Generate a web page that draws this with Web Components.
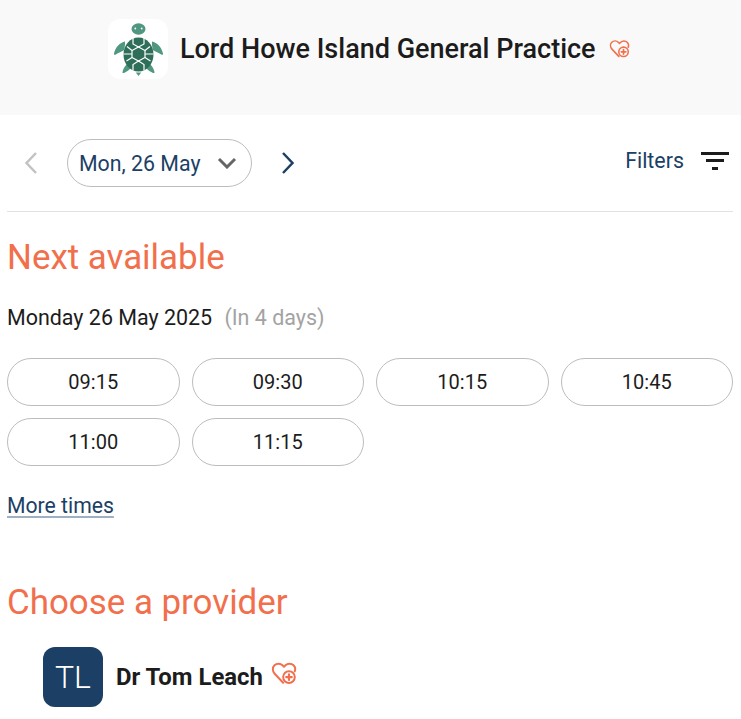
<!DOCTYPE html>
<html lang="en"><head><meta charset="utf-8"><title>Lord Howe Island General Practice</title>
<style>
html,body{margin:0;padding:0;background:#fff;font-family:Roboto,"Liberation Sans",sans-serif;color:#1c1c1c}
html{overflow:hidden}
</style></head><body>
<booking-page></booking-page>
<template id="heart"><svg viewBox="0 0 24 24" width="100%" height="100%" fill="none" stroke="#f26f4c" stroke-width="1.8" stroke-linecap="round" stroke-linejoin="round" style="display:block"><path d="M11.2 21 3.400 12.700C1.200 10.300 1.200 6.900 3.200 4.900 5.300 2.900 8.600 2.900 10.600 4.900L12 6.300l1.400-1.400c2-2 5.400-2 7.400 0 1.500 1.500 1.900 3.700 1.100 5.600"/><circle cx="16.600" cy="15.800" r="5.400" fill="#fff"/><path d="M16.600 13.200v5.200M14 15.800h5.200" stroke-width="2"/></svg></template>
<script>
const heartMarkup=document.getElementById('heart').innerHTML;
class HeartIcon extends HTMLElement{constructor(){super();this.attachShadow({mode:'open'}).innerHTML=`<style>:host{display:block;width:var(--s,24px);height:var(--s,24px);flex:none}</style>${heartMarkup}`}}
customElements.define('heart-icon',HeartIcon);

class TurtleLogo extends HTMLElement{constructor(){super();this.attachShadow({mode:'open'}).innerHTML=`<style>:host{display:block;width:60px;height:60px;border-radius:12px;background:#fff;flex:none}svg{display:block}</style>
<svg viewBox="0 0 60 60" width="60" height="60">
<ellipse cx="30.500" cy="10" rx="7" ry="5.800" fill="#4f9780"/>
<circle cx="27.300" cy="9.500" r="0.900" fill="#fff"/><circle cx="33.700" cy="9.500" r="0.900" fill="#fff"/>
<path d="M17 22.500C12 23.500 7.500 28 6 34.500c-.2 1.200.8 1.700 1.800 1 2.500-1.800 6-2.500 8-4.200 1-2.800 1.500-5.800 1.200-8.800zM44 22.500c5 1 9.500 5.500 11 12 .2 1.200-.8 1.700-1.800 1-2.500-1.800-6-2.500-8-4.200-1-2.800-1.500-5.800-1.200-8.800z" fill="#4f9780"/>
<path d="M19.500 44.500c-2.300 2-4.300 5-5 8.500-.2 1 .6 1.400 1.500.9 2.300-1.100 5-2.500 7-4.900zM41.500 44.500c2.300 2 4.300 5 5 8.500.2 1-.6 1.400-1.500.9-2.300-1.100-5-2.500-7-4.900z" fill="#4f9780"/>
<path d="M27.800 53.500h5.400l-2.700 3.500z" fill="#4f9780"/>
<ellipse cx="30.500" cy="35.500" rx="15" ry="17" fill="#2f6f5a"/>
<g fill="none" stroke="#fff" stroke-width="1.200">
<path d="M30.500 28l6.500 3.500v7l-6.500 3.500-6.500-3.500v-7z"/>
<path d="M24 31.500l-5-4M37 31.500l5-4M30.500 28l-5.500-3v-6M30.500 28l5.500-3v-6M24 38.500l-5.500 3.500M37 38.500l5.500 3.500M30.500 42l-5.500 3.500v6M30.500 42l5.500 3.500v6M15.500 35h8.500M37 35h8.500"/>
</g></svg>`}}
customElements.define('turtle-logo',TurtleLogo);

class PracticeHeader extends HTMLElement{constructor(){super();this.attachShadow({mode:'open'}).innerHTML=`<style>
:host{display:flex;height:115px;box-sizing:border-box;padding:0 3px 17px 0;background:#f9f9f9;align-items:center;justify-content:center}
h1{margin:0 13.500px 0 12px;font:500 27px/1.2 Roboto,sans-serif;color:#1c1c1c;white-space:nowrap}
heart-icon{--s:21px;margin-top:-2px}
</style><turtle-logo></turtle-logo><h1><slot></slot></h1><heart-icon></heart-icon>`}}
customElements.define('practice-header',PracticeHeader);

class DateNav extends HTMLElement{constructor(){super();this.attachShadow({mode:'open'}).innerHTML=`<style>
:host{display:flex;align-items:center;height:97px;box-sizing:border-box;border-bottom:1px solid #e2e2e2;color:#1c3f66}
.ch{display:block;flex:none}
.pill{display:flex;align-items:center;box-sizing:border-box;width:185px;height:48px;margin:0 28px;padding:0 14px 0 11px;border:1px solid #bdbdbd;border-radius:24px;font-size:21.330px;justify-content:space-between}
.end{margin-left:auto;margin-right:3px;display:flex;align-items:center;font-size:21.400px;padding-bottom:5px}
.filter{display:block;margin-left:16px;margin-top:3px}
</style>
<svg class="ch" style="margin-left:16px" width="16" height="24" viewBox="0 0 16 24" fill="none" stroke="#c2c2c2" stroke-width="2.500"><path d="M13 2 3.500 12 13 22"/></svg>
<div class="pill"><span>Mon, 26 May</span><svg width="20" height="12" viewBox="0 0 20 12" fill="none" stroke="#666" stroke-width="3"><path d="M2 2l8 8 8-8"/></svg></div>
<svg class="ch" width="16" height="24" viewBox="0 0 16 24" fill="none" stroke="#1c3f66" stroke-width="2.500"><path d="M3 2l9.500 10L3 22"/></svg>
<div class="end"><span>Filters</span><svg class="filter" width="30" height="20" viewBox="0 0 30 20" fill="#1c1c1c"><rect x="1" y="0" width="28" height="3"/><rect x="6" y="7" width="18" height="3"/><rect x="12" y="15" width="6" height="3"/></svg></div>`}}
customElements.define('date-nav',DateNav);

class SectionTitle extends HTMLElement{constructor(){super();this.attachShadow({mode:'open'}).innerHTML=`<style>
:host{display:block;font-size:34.900px;line-height:42px;font-weight:400;color:#f26f4c}
</style><slot></slot>`}}
customElements.define('section-title',SectionTitle);

class TimeSlot extends HTMLElement{constructor(){super();this.attachShadow({mode:'open'}).innerHTML=`<style>
:host{display:flex;align-items:center;justify-content:center;height:48px;box-sizing:border-box;border:1px solid #bdbdbd;border-radius:24px;font-size:20px;color:#1c1c1c}
</style><slot></slot>`}}
customElements.define('time-slot',TimeSlot);

class SlotGrid extends HTMLElement{constructor(){super();this.attachShadow({mode:'open'}).innerHTML=`<style>
:host{display:grid;grid-template-columns:repeat(4,1fr);gap:12px}
</style><slot></slot>`}}
customElements.define('slot-grid',SlotGrid);

class ProviderRow extends HTMLElement{constructor(){super();this.attachShadow({mode:'open'}).innerHTML=`<style>
:host{display:flex;align-items:center;padding-left:36px}
.av{width:60px;height:60px;border-radius:12px;background:#1c3f66;color:#fff;font-size:32px;font-weight:300;display:flex;align-items:center;justify-content:center;flex:none}
.n{margin:0 8px 0 13px;font-size:23.900px;font-weight:700;color:#1c1c1c;white-space:nowrap}
heart-icon{--s:26px;margin-top:-8px}
</style><div class="av"><slot name="i"></slot></div><div class="n"><slot></slot></div><heart-icon></heart-icon>`}}
customElements.define('provider-row',ProviderRow);

class BookingPage extends HTMLElement{constructor(){super();this.attachShadow({mode:'open'}).innerHTML=`<style>
:host{display:block;height:719px;overflow:hidden;font-family:Roboto,"Liberation Sans",sans-serif}
main{padding:0 8px 0 7px}
section-title.a{margin-top:25px}
.d{margin-top:27px;font-size:21.450px;line-height:24px;color:#1c1c1c}
.d span{margin-left:7px;color:#a3a3a3}
slot-grid{margin-top:28px}
a{display:inline-block;margin-top:28px;font-size:21.200px;line-height:24px;color:#1c3f66;text-decoration:underline;text-decoration-color:#9fb0c2;text-underline-offset:3px}
section-title.b{margin-top:64px}
provider-row{margin-top:23px}
</style>
<practice-header>Lord Howe Island General Practice</practice-header>
<main>
<date-nav></date-nav>
<section-title class="a">Next available</section-title>
<div class="d">Monday 26 May 2025 <span>(In 4 days)</span></div>
<slot-grid><time-slot>09:15</time-slot><time-slot>09:30</time-slot><time-slot>10:15</time-slot><time-slot>10:45</time-slot><time-slot>11:00</time-slot><time-slot>11:15</time-slot></slot-grid>
<a href="#">More times</a>
<section-title class="b">Choose a provider</section-title>
<provider-row><span slot="i">TL</span>Dr Tom Leach</provider-row>
</main>`}}
customElements.define('booking-page',BookingPage);
</script>
</body></html>
